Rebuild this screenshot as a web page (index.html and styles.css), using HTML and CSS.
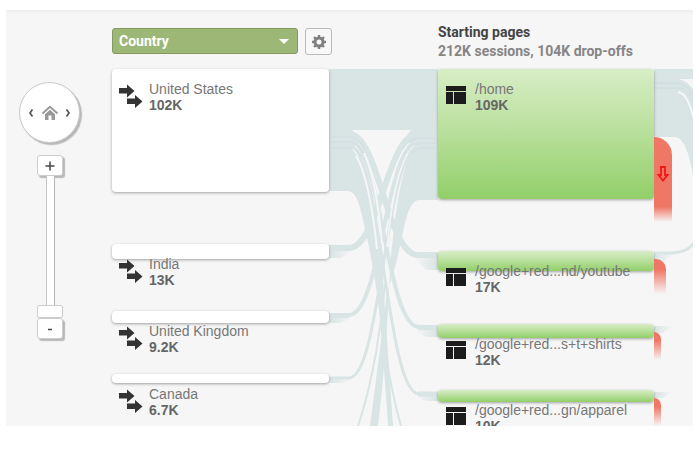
FILE: index.html
```html
<!DOCTYPE html>
<html lang="en">
<head>
<meta charset="utf-8">
<title>Users Flow</title>
<link rel="stylesheet" href="styles.css">
</head>
<body>
<svg class="defs" aria-hidden="true">
  <symbol id="arrows" viewBox="0 0 24 24"><path d="M0 4h8V0.500l7.500 6.500-7.500 6.500V9.500H0zM8 14.500h8V11l7.500 6.500-7.500 6.500v-4H8z"/></symbol>
  <symbol id="page" viewBox="0 0 22 20"><path d="M1 1h20v5H1zM1 7h7v12H1zM9 7h12v12H9z"/></symbol>
</svg>
<main class="panel">
  <aside class="controls">
    <div class="pan">
      <button class="pan-btn" aria-label="Scroll left"><svg viewBox="0 0 6 10" width="6" height="10"><path d="M4.500 1.500 2 5l2.500 3.500" fill="none" stroke="#555" stroke-width="1.700"/></svg></button>
      <button class="pan-btn" aria-label="Home"><svg viewBox="0 0 18 16" width="18" height="16"><path d="M1.500 8.500 9 1.800l7.500 6.700" fill="none" stroke="#999" stroke-width="2"/><path d="M4 9.200 9 4.800l5 4.400V15h-3.500v-4.500h-3V15H4z" fill="#999"/></svg></button>
      <button class="pan-btn" aria-label="Scroll right"><svg viewBox="0 0 6 10" width="6" height="10"><path d="M1.500 1.500 4 5 1.500 8.500" fill="none" stroke="#555" stroke-width="1.700"/></svg></button>
    </div>
    <button class="zoom-btn" aria-label="Zoom in"><svg viewBox="0 0 10 10" width="10" height="10"><path d="M5 .5v9M.5 5h9" stroke="#444" stroke-width="1.500"/></svg></button>
    <input class="zoom-range" type="range" min="0" max="10" value="0" aria-label="Zoom level">
    <button class="zoom-btn" aria-label="Zoom out"><svg viewBox="0 0 10 10" width="10" height="10"><path d="M3 5.500h4" stroke="#444" stroke-width="1.500"/></svg></button>
  </aside>

  <header class="dimension">
    <div class="select-wrap">
      <select class="select" aria-label="Dimension"><option>Country</option></select>
      <svg class="caret" viewBox="0 0 10 5" width="10" height="5"><path d="M0 0h10L5 5z" fill="#fff"/></svg>
    </div>
    <button class="gear" aria-label="Settings"><svg viewBox="0 0 16 16" width="16" height="16"><circle cx="8" cy="8" r="4" fill="none" stroke="#808080" stroke-width="3"/><path d="M8 1v2.500M8 12.500V15M1 8h2.500M12.500 8H15M3 3l1.800 1.800M11.200 11.200 13 13M13 3l-1.800 1.800M4.800 11.200 3 13" stroke="#808080" stroke-width="2.400"/></svg></button>
  </header>

  <header class="step">
    <h2 class="step-title">Starting pages</h2>
    <p class="step-info">212K sessions, 104K drop-offs</p>
  </header>

  <section class="nodes countries">
    <article class="slot us"><div class="card"></div><div class="label"><svg class="icon"><use href="#arrows"/></svg><p class="name">United States</p><p class="count">102K</p></div></article>
    <article class="slot india"><div class="card"></div><div class="label"><svg class="icon"><use href="#arrows"/></svg><p class="name">India</p><p class="count">13K</p></div></article>
    <article class="slot uk"><div class="card"></div><div class="label"><svg class="icon"><use href="#arrows"/></svg><p class="name">United Kingdom</p><p class="count">9.2K</p></div></article>
    <article class="slot canada"><div class="card"></div><div class="label"><svg class="icon"><use href="#arrows"/></svg><p class="name">Canada</p><p class="count">6.7K</p></div></article>
  </section>

  <svg class="links" viewBox="0 0 109 357" preserveAspectRatio="none" aria-hidden="true">
    <defs>
      <linearGradient id="fadeOut"><stop offset="0" stop-color="#d9e4e5"/><stop offset="1" stop-color="#d9e4e5" stop-opacity="0"/></linearGradient>
      <linearGradient id="fadeIn"><stop offset="0" stop-color="#d9e4e5" stop-opacity="0"/><stop offset="1" stop-color="#d9e4e5"/></linearGradient>
    </defs>
    <g fill="#d9e4e5">
      <path d="M0 0H109V61H0z"/>
      <path d="M0 61H23L31 72 23 80 31 90C42 115 47 150 54 210 57 260 61 310 64 357H59C57 320 53 275 49 231 46 210 43 194 40 178L33 146C29 130 26 122 18 122H0z"/>
      <path d="M109 61H82L74 72 86 76 80 88C72 104 65 150 61 200 59 255 54 320 49 357H41C46 320 51 280 57 231 61 211 66 201 69 186L76 154C80 138 84 131 91 131H109z"/>
    </g>
    <g fill="none" stroke="#d9e4e5">
      <path d="M0 65H20C50 65 58 186 89 186H109" stroke-width="6"/>
      <path d="M0 71H20C52 71 57 258 90 258H109" stroke-width="4"/>
      <path d="M0 76H20C52 76 57 325 90 325H109" stroke-width="3"/>
      <path d="M0 179H20C50 179 58 65 89 65H109" stroke-width="6"/>
      <path d="M0 246H20C52 246 57 72 90 72H109" stroke-width="4"/>
      <path d="M0 309H20C52 309 57 77 90 77H109" stroke-width="3"/>
      <path d="M29 357C45 310 53 250 56 215M72 357C60 315 52 260 50 215" stroke-width="2"/>
    </g>
    <g stroke="#d9e4e5" stroke-width="5"><path d="M0 179.500H20M0 246.500H20M89 186.500H109M89 258.500H109M89 325H109"/></g>
    <g fill="none" stroke="#cadadc" stroke-opacity=".6"><path d="M3 68H22Q30 70 36 80M3 73H22Q30 75 35 85M3 79H22Q29 81 34 90M106 69H88Q80 71 74 80M106 74H90Q80 76 75 85M106 79H92Q84 81 78 90"/></g>
    <g fill="none" stroke="#f6f6f6"><path d="M27 87C36 100 44 140 48 180" stroke-width="2"/><path d="M35 84C45 105 50 140 53 175" stroke-width="2"/><path d="M79 84C67 105 62 140 58 178" stroke-width="1.500"/></g>
    <g fill="url(#fadeOut)"><path d="M0 181H24L12 189H0zM0 248H24L12 254H0zM0 310H24L12 314H0z"/></g>
    <g fill="url(#fadeIn)"><path d="M85 188H109V201H97zM85 260H109V268H97zM85 327H109V332H97z"/></g>
  </svg>

  <section class="nodes pages">
    <article class="slot home"><div class="card"></div><div class="drop"><svg viewBox="0 0 12 16" width="12" height="16"><path d="M4 1h4v8h2.500L6 14.500 1.500 9H4z" fill="none" stroke="#f21818" stroke-width="1.800"/></svg></div><div class="label"><svg class="icon"><use href="#page"/></svg><p class="name">/home</p><p class="count">109K</p></div></article>
    <article class="slot youtube"><div class="card"></div><div class="drop"></div><div class="label"><svg class="icon"><use href="#page"/></svg><p class="name">/google+red...nd/youtube</p><p class="count">17K</p></div></article>
    <article class="slot shirts"><div class="card"></div><div class="drop"></div><div class="label"><svg class="icon"><use href="#page"/></svg><p class="name">/google+red...s+t+shirts</p><p class="count">12K</p></div></article>
    <article class="slot apparel"><div class="card"></div><div class="drop"></div><div class="label"><svg class="icon"><use href="#page"/></svg><p class="name">/google+red...gn/apparel</p><p class="count">10K</p></div></article>
  </section>

  <svg class="links" viewBox="0 0 39 357" preserveAspectRatio="none" aria-hidden="true">
    <path d="M0 0H39V106C35 84 30 68 20 68H0z" fill="#d9e4e5"/>
    <path d="M24 10H39V20Q32 11 24 10z" fill="#f6f6f6"/>
    <path d="M24 23C31 24 35 32 40 50" fill="none" stroke="#f6f6f6" stroke-width="2"/>
    <path d="M0 14H24Q33 15 39 26M0 19H26Q34 20 39 32" fill="none" stroke="#c8d9dc" stroke-opacity=".7"/>
    <path d="M0 184H18Q34 183 40 174" fill="none" stroke="#d9e4e5" stroke-width="3"/>
    <path d="M0 184H20L10 192H0zM0 257H20L8 264H0zM0 323H20L8 329H0z" fill="url(#fadeOut)"/>
  </svg>
</main>
</body>
</html>
```
FILE: styles.css
```css
* { box-sizing: border-box; }
body {
  margin: 0;
  padding: 10px 6px 0;
  background: #fff;
  font-family: "Liberation Sans", Arial, sans-serif;
  font-size: 14px;
  line-height: 16px;
  color: #777;
}
h2, p { margin: 0; }
button { padding: 0; cursor: pointer; }
.defs { display: none; }

.panel {
  display: grid;
  grid-template-columns: 106px minmax(0, 217fr) minmax(0, 109fr) minmax(0, 216fr) minmax(0, 39fr);
  grid-template-rows: 59px minmax(0, 1fr);
  height: calc(100vh - 33px);
  overflow: hidden;
  background: linear-gradient(#eee, #f6f6f6 5px);
}

.controls {
  grid-row: 1 / 3;
  display: flex;
  flex-direction: column;
  align-items: center;
  padding: 72px 19px 0 0;
}
.pan {
  display: flex;
  align-items: center;
  justify-content: space-between;
  width: 61px;
  height: 61px;
  padding: 0 8px;
  margin-bottom: 12px;
  flex: none;
  border: 1px solid #c8c8c8;
  border-radius: 50%;
  background: #fff;
  box-shadow: 2px 2px 1px #b8b8b8;
}
.pan-btn { display: flex; border: 0; background: none; }
.zoom-btn {
  display: flex;
  align-items: center;
  justify-content: center;
  width: 26px;
  height: 21px;
  flex: none;
  border: 1px solid #ccc;
  border-radius: 3px;
  background: #fff;
  box-shadow: 2px 2px 1px #b8b8b8;
}
.zoom-range {
  appearance: none;
  writing-mode: vertical-lr;
  direction: rtl;
  width: 26px;
  height: 142px;
  margin: 0;
  flex: none;
  background: linear-gradient(90deg, transparent 9px, #c4c4c4 9px 10px, #fff 10px 17px, #b4b4b4 17px 18px, transparent 18px);
}
.zoom-range::-webkit-slider-thumb {
  appearance: none;
  width: 26px;
  height: 13px;
  border: 1px solid #ccc;
  border-radius: 2px;
  background: #fff;
}

.dimension { display: flex; align-items: flex-start; gap: 7px; padding-top: 18px; }
.select-wrap { position: relative; flex: 0 0 186px; }
.select {
  appearance: none;
  display: block;
  width: 100%;
  height: 26px;
  padding: 0 6px;
  border: 1px solid #829a5f;
  border-radius: 3px;
  background: #9db776;
  color: #fff;
  font: bold 14px/16px Roboto, sans-serif;
}
.caret { position: absolute; right: 9px; top: 11px; }
.gear {
  display: flex;
  align-items: center;
  justify-content: center;
  width: 27px;
  height: 27px;
  flex: none;
  border: 1px solid #bbb;
  border-radius: 3px;
  background: #f8f8f8;
}

.step {
  grid-column: 4 / 6;
  padding-top: 13px;
  font-family: Roboto, sans-serif;
  line-height: 19px;
}
.step-title { font-size: 14px; color: #444; }
.step-info { font-weight: bold; color: #858585; }

.countries { grid-column: 2; }
.nodes { position: relative; z-index: 1; }
.slot { position: relative; }
.card {
  border-radius: 4px;
  background: #fff;
  box-shadow: 0 1px 3px rgba(0, 0, 0, .35);
}
.pages .card { background: linear-gradient(#d8edc6, #b7df9a 50%, #92cf69); }
.label {
  position: absolute;
  top: 12px;
  left: 7px;
  display: grid;
  grid-template-columns: 24px 1fr;
  column-gap: 6px;
  line-height: 16px;
}
.icon { grid-row: 1 / 3; width: 24px; height: 24px; margin-top: 3px; fill: #333; }
.pages .icon { width: 22px; height: 20px; margin-top: 4px; fill: #1c1c1c; }
.count { font-weight: bold; color: #666; }

.us { height: 175px; }
.us .card { height: 123px; }
.india { height: 67px; }
.india .card { height: 15px; }
.uk { height: 63px; }
.uk .card { height: 12px; }
.canada .card { height: 9px; }
.home { height: 182px; }
.home .card { height: 130px; }
.youtube { height: 73px; }
.youtube .card { height: 20px; }
.shirts { height: 66px; }
.shirts .card { height: 14px; }
.apparel .card { height: 12px; }

.drop {
  position: absolute;
  left: 100%;
  top: 8px;
  width: 7px;
  height: 28px;
  border-radius: 0 7px 0 0;
  background: linear-gradient(#ef7766 30%, rgba(239, 119, 102, 0));
}
.youtube .drop { width: 12px; height: 35px; border-radius: 0 10px 0 0; }
.home .drop {
  display: flex;
  justify-content: center;
  top: 68px;
  width: 18px;
  height: 85px;
  padding-top: 29px;
  border-radius: 0 18px 0 0;
  background: linear-gradient(#ef7766 82%, rgba(239, 119, 102, 0));
}

.links { display: block; width: 100%; height: 357px; }
```
